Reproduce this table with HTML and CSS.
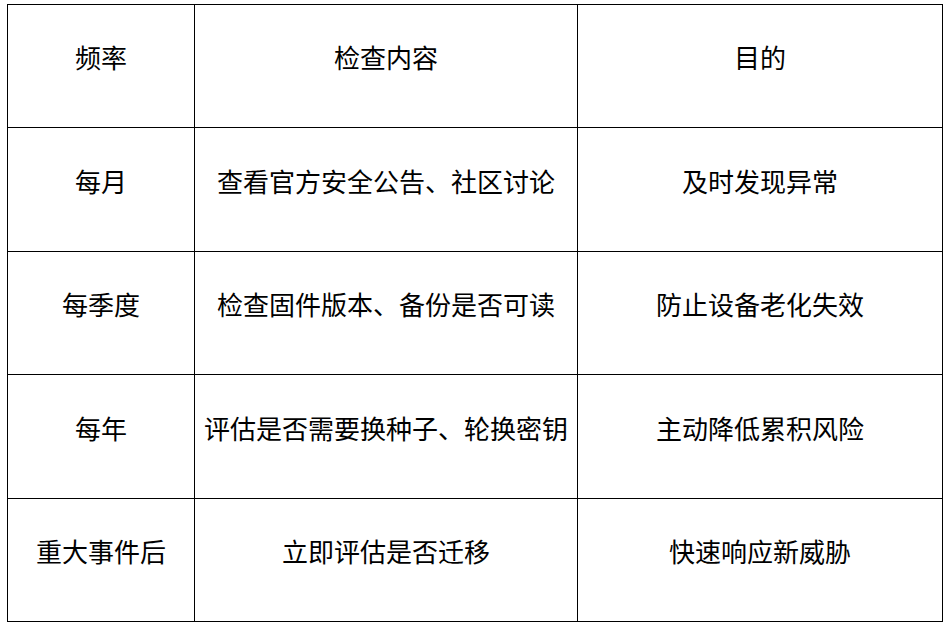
FILE: index.html
```html
<!DOCTYPE html>
<html lang="zh-CN">
<head>
<meta charset="utf-8">
<link rel="stylesheet" href="styles.css">
</head>
<body>
<table class="plan">
  <colgroup>
    <col class="c1"><col class="c2"><col class="c3">
  </colgroup>
  <tr class="r1"><td>频率</td><td>检查内容</td><td>目的</td></tr>
  <tr class="r2"><td>每月</td><td>查看官方安全公告、社区讨论</td><td>及时发现异常</td></tr>
  <tr class="r1"><td>每季度</td><td>检查固件版本、备份是否可读</td><td>防止设备老化失效</td></tr>
  <tr class="r2"><td>每年</td><td>评估是否需要换种子、轮换密钥</td><td>主动降低累积风险</td></tr>
  <tr class="r1"><td>重大事件后</td><td>立即评估是否迁移</td><td>快速响应新威胁</td></tr>
</table>
</body>
</html>
```
FILE: styles.css
```css
html, body {
  margin: 0;
  padding: 0;
  background: #fff;
}
.plan {
  margin: 4px 0 0 7px;
  border-collapse: collapse;
  table-layout: fixed;
  width: 935px;
  font-family: "Noto Sans CJK SC", sans-serif;
  font-size: 26px;
  color: #000;
}
.c1 { width: 187px; }
.c2 { width: 383px; }
.c3 { width: 365px; }
.plan td {
  border: 1px solid #000;
  text-align: center;
  vertical-align: middle;
  padding: 0 0 18px 0;
  line-height: 32px;
  white-space: nowrap;
}
.r1 td { height: 104px; }
.r2 td { height: 105px; }
```
